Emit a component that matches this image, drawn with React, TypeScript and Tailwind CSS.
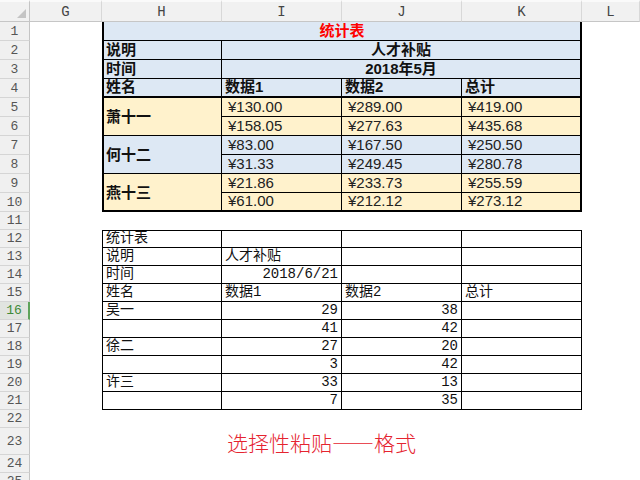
import React from "react";
import clsx from "clsx";

const mono = "font-['Liberation_Mono','Noto_Sans_CJK_SC',monospace]";
const sans = "font-['Liberation_Sans','Noto_Sans_CJK_SC',sans-serif]";
const blue = "bg-[#dde8f4]";
const beige = "bg-[#fff2cc]";

function RowHead({ n, active }: { n: number; active?: boolean }) {
  return (
    <div
      className={clsx(
        "flex items-center justify-center border-b border-[#d5d5d5] text-[13px] leading-none",
        mono,
        active
          ? "bg-[#e1e4e0] text-[#3f8a3a] border-r-2 border-r-[#5ea35a]"
          : "bg-[#f0f0f0] text-[#555] border-r border-r-[#c4c4c4]"
      )}
    >
      {n}
    </div>
  );
}

function ColHead({ label }: { label: string }) {
  return (
    <div className={clsx("flex items-end justify-center pb-[2px] bg-[#f1f1f1] border-t-2 border-t-[#fafafa] border-b border-b-[#c6c6c6] border-r border-r-[#d8d8d8] text-[14px] text-[#444] leading-none", mono)}>
      {label}
    </div>
  );
}

// upper (formatted) table
const groups = [
  { name: "萧十一", bg: beige, rows: [["130.00", "289.00", "419.00"], ["158.05", "277.63", "435.68"]] },
  { name: "何十二", bg: blue, rows: [["83.00", "167.50", "250.50"], ["31.33", "249.45", "280.78"]] },
  { name: "燕十三", bg: beige, rows: [["21.86", "233.73", "255.59"], ["61.00", "212.12", "273.12"]] },
];

// lower (plain) table
const plain: { h: string; i: string; j: string; k: string; num?: boolean }[] = [
  { h: "统计表", i: "", j: "", k: "" },
  { h: "说明", i: "人才补贴", j: "", k: "" },
  { h: "时间", i: "2018/6/21", j: "", k: "", num: true },
  { h: "姓名", i: "数据1", j: "数据2", k: "总计" },
  { h: "吴一", i: "29", j: "38", k: "", num: true },
  { h: "", i: "41", j: "42", k: "", num: true },
  { h: "徐二", i: "27", j: "20", k: "", num: true },
  { h: "", i: "3", j: "42", k: "", num: true },
  { h: "许三", i: "33", j: "13", k: "", num: true },
  { h: "", i: "7", j: "35", k: "", num: true },
];

function ValueCell({ v, bg, last, right }: { v: string; bg: string; last: boolean; right?: boolean }) {
  return (
    <div
      className={clsx(
        "flex items-end pl-[6px] pb-[1px] border-black text-[15px] leading-[17px] text-[#222]",
        sans,
        bg,
        last ? "border-b-2" : "border-b",
        right ? "border-r-2" : "border-r"
      )}
    >
      ¥{v}
    </div>
  );
}

export default function App() {
  return (
    <div lang="zh-CN" className="w-[640px] h-[480px] overflow-hidden bg-white">
      <div className="grid grid-cols-[30px_72px_120px_120px_120px_120px_58px] grid-rows-[22px_repeat(10,19px)_repeat(12,18px)_27px_18px_18px]">
        {/* column header */}
        <div className="relative bg-[#f1f1f1] border-t-2 border-t-[#fafafa] border-b border-b-[#c6c6c6] border-r border-r-[#c4c4c4]">
          <svg className="absolute right-[3px] bottom-[3px]" width="9" height="9" viewBox="0 0 9 9">
            <path d="M9 0 L9 9 L0 9 Z" fill="#c4c4c4" />
          </svg>
        </div>
        {["G", "H", "I", "J", "K", "L"].map((c) => (
          <ColHead key={c} label={c} />
        ))}

        {/* row 1 */}
        <RowHead n={1} />
        <div />
        <div className={clsx("col-span-4 flex items-end justify-center pb-[1px] border-l-2 border-r-2 border-b border-black text-[15px] leading-[17px] font-bold text-[#ff0000]", sans, blue)}>
          统计表
        </div>
        <div />

        {/* rows 2-3 */}
        {[
          ["说明", "人才补贴"],
          ["时间", "2018年5月"],
        ].map(([a, b], idx) => (
          <React.Fragment key={a}>
            <RowHead n={idx + 2} />
            <div />
            <div className={clsx("flex items-end pl-[2px] pb-[1px] border-l-2 border-r border-b border-black text-[15px] leading-[17px] font-bold text-[#111]", sans, blue)}>{a}</div>
            <div className={clsx("col-span-3 flex items-end justify-center pb-[1px] border-r-2 border-b border-black text-[15px] leading-[17px] font-bold text-[#111]", sans, blue)}>{b}</div>
            <div />
          </React.Fragment>
        ))}

        {/* row 4 */}
        <RowHead n={4} />
        <div />
        {["姓名", "数据1", "数据2", "总计"].map((t, i) => (
          <div
            key={t}
            className={clsx(
              "flex items-end pb-[1px] border-b-2 border-black text-[15px] leading-[17px] font-bold text-[#111]",
              sans,
              blue,
              i === 0 ? "border-l-2 pl-[2px]" : "pl-[3px]",
              i === 3 ? "border-r-2" : "border-r"
            )}
          >
            {t}
          </div>
        ))}
        <div />

        {/* rows 5-10 */}
        {groups.map((g, gi) => {
          const last = gi === groups.length - 1;
          return (
            <React.Fragment key={g.name}>
              <RowHead n={5 + gi * 2} />
              <div />
              <div
                className={clsx(
                  "row-span-2 flex items-center pl-[2px] pt-[2px] border-l-2 border-r border-black text-[15px] font-bold text-[#111]",
                  sans,
                  g.bg,
                  last ? "border-b-2" : "border-b"
                )}
              >
                {g.name}
              </div>
              {g.rows[0].map((v, i) => (
                <ValueCell key={i} v={v} bg={g.bg} last={false} right={i === 2} />
              ))}
              <div />
              <RowHead n={6 + gi * 2} />
              <div />
              {g.rows[1].map((v, i) => (
                <ValueCell key={i} v={v} bg={g.bg} last={last} right={i === 2} />
              ))}
              <div />
            </React.Fragment>
          );
        })}

        {/* row 11 */}
        <RowHead n={11} />
        <div className="col-span-6" />

        {/* rows 12-21 */}
        {plain.map((r, idx) => {
          const n = 12 + idx;
          const cell = "flex items-end pb-[1px] border-r border-b border-black text-[14px] leading-[15px] text-[#111]";
          return (
            <React.Fragment key={n}>
              <RowHead n={n} active={n === 16} />
              <div />
              <div className={clsx(cell, mono, "border-l pl-[3px]", idx === 0 && "border-t")}>{r.h}</div>
              <div className={clsx(cell, mono, r.num ? "justify-end pr-[3px] text-[13px]" : "pl-[3px]", idx === 0 && "border-t")}>{r.i}</div>
              <div className={clsx(cell, mono, r.num ? "justify-end pr-[3px] text-[13px]" : "pl-[3px]", idx === 0 && "border-t")}>{r.j}</div>
              <div className={clsx(cell, mono, "pl-[3px]", idx === 0 && "border-t")}>{r.k}</div>
              <div />
            </React.Fragment>
          );
        })}

        {/* row 22 */}
        <RowHead n={22} />
        <div className="col-span-6" />

        {/* row 23 */}
        <RowHead n={23} />
        <div />
        <div />
        <div className="col-span-4 flex items-center pl-[5px] pt-[1px] font-['Noto_Sans_CJK_SC',sans-serif] font-light text-[21px] leading-none text-[#e5242f]">
          选择性粘贴——格式
        </div>

        {/* rows 24-25 */}
        <RowHead n={24} />
        <div className="col-span-6" />
        <RowHead n={25} />
        <div className="col-span-6" />
      </div>
    </div>
  );
}
